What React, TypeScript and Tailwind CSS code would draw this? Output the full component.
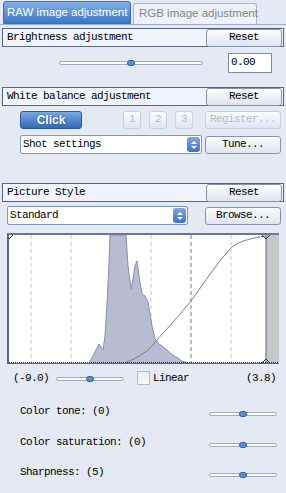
import React from "react";

const mono = "font-['Liberation_Mono',monospace] text-[11px] tracking-[-0.6px]";

function Slider({ width, pos }: { width: number; pos: number }) {
  return (
    <div className="relative h-[7px]" style={{ width }}>
      <div className="absolute left-0 right-0 top-[2px] h-[4px] rounded-full border border-[#9fabc4] bg-white" />
      <div
        className="absolute top-[1px] h-[6px] w-[8px] rounded-full border border-[#2f5e9f] bg-[#5f8fd0]"
        style={{ left: pos }}
      />
    </div>
  );
}

function Btn({ children, w = 76, disabled = false }: { children: React.ReactNode; w?: number; disabled?: boolean }) {
  return (
    <div
      className={`flex h-[18px] items-center justify-center rounded-[3px] border bg-gradient-to-b from-[#fbfcfe] to-[#dfe5f0] ${mono} ${
        disabled ? "border-[#c9d0dd] text-[#b3bccc]" : "border-[#8893ab] text-black"
      }`}
      style={{ width: w }}
    >
      {children}
    </div>
  );
}

function Header({ title }: { title: string }) {
  return (
    <div className="mx-[2px] flex h-[19px] items-center justify-between border border-[#5a6380] bg-[#f1f4fa] pl-[4px] pr-[1px]">
      <span className={`${mono} text-black`}>{title}</span>
      <Btn>Reset</Btn>
    </div>
  );
}

function Select({ label, w }: { label: string; w: number }) {
  return (
    <div
      className="flex h-[19px] items-center justify-between rounded-[2px] border border-[#7a99c4] bg-white pl-[2px] pr-[1px]"
      style={{ width: w }}
    >
      <span className={`${mono} text-black`}>{label}</span>
      <div className="flex h-[15px] w-[13px] flex-col items-center justify-center gap-[2px] rounded-[3px] bg-gradient-to-b from-[#7fa8e2] to-[#3d74c4]">
        <div className="h-0 w-0 border-x-[3px] border-b-[3px] border-x-transparent border-b-white" />
        <div className="h-0 w-0 border-x-[3px] border-t-[3px] border-x-transparent border-t-white" />
      </div>
    </div>
  );
}

function Histogram() {
  const pts: [number, number][] = [
    [87, 359], [91, 352], [95, 344], [97, 340], [99, 343], [101, 346], [103, 332], [105, 300],
    [107, 260], [108, 231], [124, 231], [126, 262], [129, 285], [131, 275], [133, 262], [135, 257],
    [137, 272], [140, 290], [143, 292], [146, 298], [148, 310], [150, 322], [153, 335], [157, 340],
    [160, 342], [164, 345], [167, 348], [172, 352], [176, 354], [180, 357], [186, 359],
  ];
  const hist =
    "M" + pts.map(([x, y]) => `${x - 7},${y - 231}`).join(" L") + ` L${186 - 7},${129} L${87 - 7},${129} Z`;
  return (
    <div className="mx-[7px] mt-[8px] h-[131px] w-[272px] border-b border-l-2 border-t-2 border-b-[#5a6380] border-l-[#5a6380] border-t-[#6d7692] bg-white">
      <svg width="270" height="128" viewBox="0 0 270 128" className="block">
        {[22, 62, 102, 142, 222].map((x) => (
          <line key={x} x1={x} y1="0" x2={x} y2="128" stroke="#c8c8c8" strokeDasharray="4 3" />
        ))}
        <line x1="182" y1="0" x2="182" y2="128" stroke="#7a7a7a" strokeDasharray="4 3" />
        <path d={hist} fill="#b9bcd0" stroke="#8a8fa9" strokeWidth="1" />
        <rect x="257" y="0" width="13" height="128" fill="#c6c7c9" />
        <line x1="257" y1="0" x2="257" y2="128" stroke="#5a6380" />
        <path
          d="M116,128 C130,122 140,116 146,107 C160,92 172,78 182,66 C195,48 210,25 223,12 C232,5 245,3 256,1"
          fill="none"
          stroke="#7d7d7d"
          strokeWidth="1"
        />
        <path d="M0,4 L4,0" stroke="#222" />
        <path d="M253,0 L257,4 L261,0" fill="none" stroke="#333" />
        <path d="M253,128 L257,124 L261,128" fill="none" stroke="#333" />
        <line x1="0" y1="127.5" x2="270" y2="127.5" stroke="#333" strokeDasharray="1 1" />
      </svg>
    </div>
  );
}

export default function App() {
  return (
    <div className="h-[493px] w-[286px] overflow-hidden bg-[#e5e9f3]">
      {/* Tabs */}
      <div className="flex h-[25px] items-end gap-[2px] border-b border-[#9fb0cc] pl-[3px]">
        <div className="flex h-[23px] w-[128px] shrink-0 items-center whitespace-nowrap rounded-t-[3px] border border-[#3c6eb0] bg-gradient-to-b from-[#80b0e6] to-[#3d78c2] pl-[3px] font-['Liberation_Sans',sans-serif] text-[11.5px] text-white">
          RAW image adjustment
        </div>
        <div className="flex h-[21px] w-[124px] shrink-0 items-center whitespace-nowrap rounded-t-[3px] border border-b-0 border-[#aab6cb] bg-[#eef1f7] pl-[5px] font-['Liberation_Sans',sans-serif] text-[11.5px] text-[#7d8699]">
          RGB image adjustment
        </div>
      </div>

      {/* Brightness */}
      <div className="mt-[3px]">
        <Header title="Brightness adjustment" />
      </div>
      <div className="mt-[5px] flex h-[21px] items-center">
        <div className="ml-[59px]">
          <Slider width={144} pos={68} />
        </div>
        <div className={`ml-[25px] flex h-[20px] w-[44px] items-center border border-[#7f8aa3] bg-white pl-[2px] ${mono} text-black`}>
          0.00
        </div>
      </div>

      {/* White balance */}
      <div className="mt-[14px]">
        <Header title="White balance adjustment" />
      </div>
      <div className="mt-[4px] flex h-[19px] items-center">
        <div className="ml-[20px] flex h-[18px] w-[62px] items-center justify-center rounded-[3px] border border-[#2c5a98] bg-gradient-to-b from-[#78aae6] to-[#3569b3] font-['Liberation_Sans',sans-serif] text-[12px] font-bold text-white [text-shadow:0_0_2px_#1d3f70]">
          Click
        </div>
        <div className="ml-[41px] flex gap-[8px]">
          {["1", "2", "3"].map((n) => (
            <Btn key={n} w={18} disabled>
              {n}
            </Btn>
          ))}
        </div>
        <div className="ml-[12px]">
          <Btn disabled>Register...</Btn>
        </div>
      </div>
      <div className="mt-[6px] flex items-center">
        <div className="ml-[20px]">
          <Select label="Shot settings" w={182} />
        </div>
        <div className="ml-[3px]">
          <Btn>Tune...</Btn>
        </div>
      </div>

      {/* Picture style */}
      <div className="mt-[29px]">
        <Header title="Picture Style" />
      </div>
      <div className="mt-[4px] flex items-center">
        <div className="ml-[7px]">
          <Select label="Standard" w={181} />
        </div>
        <div className="ml-[17px]">
          <Btn>Browse...</Btn>
        </div>
      </div>

      <Histogram />

      <div className={`mt-[6px] flex h-[16px] items-center ${mono} text-black`}>
        <span className="ml-[13px]">(-9.0)</span>
        <div className="ml-[7px]">
          <Slider width={68} pos={30} />
        </div>
        <div className="ml-[13px] h-[14px] w-[13px] border border-[#b4bccb] bg-gradient-to-b from-[#e9edf4] to-[#f7f8fb]" />
        <span className="ml-[3px]">Linear</span>
        <span className="ml-auto mr-[10px]">(3.8)</span>
      </div>

      {[
        ["Color tone: (0)", 18],
        ["Color saturation: (0)", 17],
        ["Sharpness: (5)", 16],
      ].map(([label, mt]) => (
        <div key={label as string} className="flex h-[14px] items-center" style={{ marginTop: mt as number }}>
          <span className={`ml-[20px] ${mono} text-black`}>{label}</span>
          <div className="ml-auto mr-[9px] mt-[4px]">
            <Slider width={68} pos={30} />
          </div>
        </div>
      ))}
    </div>
  );
}
